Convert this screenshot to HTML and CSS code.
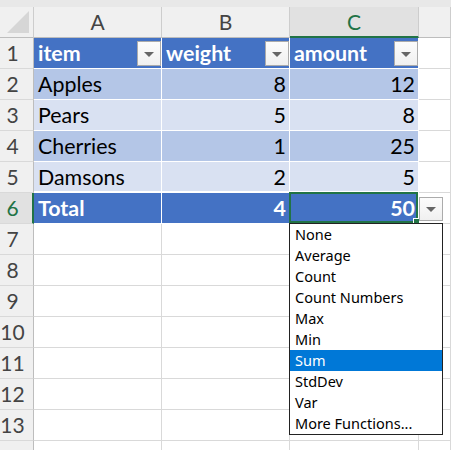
FILE: index.html
```html
<!DOCTYPE html>
<html lang="en">
<head>
  <meta charset="UTF-8">
  <title>Table Total Row</title>
  <link rel="stylesheet" href="styles.css">
</head>
<body>

  <div class="topbar"></div>

  <div class="sheet">
    <!-- column headers -->
    <div class="corner">
      <svg width="23" height="23" viewBox="0 0 23 23"><polygon points="22,0 22,22 0,22" fill="#d6d6d6"/></svg>
    </div>
    <div class="col-head">A</div>
    <div class="col-head">B</div>
    <div class="col-head active">C</div>
    <div class="col-head"></div>

    <!-- row 1: table header -->
    <div class="row-head">1</div>
    <div class="cell t th">item<span class="filter"></span></div>
    <div class="cell t th">weight<span class="filter"></span></div>
    <div class="cell t th">amount<span class="filter"></span></div>
    <div class="cell"></div>

    <div class="row-head">2</div>
    <div class="cell t band1">Apples</div>
    <div class="cell t band1 num">8</div>
    <div class="cell t band1 num">12</div>
    <div class="cell"></div>

    <div class="row-head">3</div>
    <div class="cell t band2">Pears</div>
    <div class="cell t band2 num">5</div>
    <div class="cell t band2 num">8</div>
    <div class="cell"></div>

    <div class="row-head">4</div>
    <div class="cell t band1">Cherries</div>
    <div class="cell t band1 num">1</div>
    <div class="cell t band1 num">25</div>
    <div class="cell"></div>

    <div class="row-head">5</div>
    <div class="cell t band2 last">Damsons</div>
    <div class="cell t band2 last num">2</div>
    <div class="cell t band2 last num">5</div>
    <div class="cell"></div>

    <div class="row-head active">6</div>
    <div class="cell t total">Total</div>
    <div class="cell t total num">4</div>
    <div class="cell t total num selected">
      50
      <span class="sel-box"><span class="handle"></span></span>
      <span class="drop-btn"></span>
      <ul class="func-list">
        <li>None</li>
        <li>Average</li>
        <li>Count</li>
        <li>Count Numbers</li>
        <li>Max</li>
        <li>Min</li>
        <li class="hover">Sum</li>
        <li>StdDev</li>
        <li>Var</li>
        <li>More Functions...</li>
      </ul>
    </div>
    <div class="cell"></div>

    <div class="row-head">7</div><div class="cell"></div><div class="cell"></div><div class="cell"></div><div class="cell"></div>
    <div class="row-head">8</div><div class="cell"></div><div class="cell"></div><div class="cell"></div><div class="cell"></div>
    <div class="row-head">9</div><div class="cell"></div><div class="cell"></div><div class="cell"></div><div class="cell"></div>
    <div class="row-head">10</div><div class="cell"></div><div class="cell"></div><div class="cell"></div><div class="cell"></div>
    <div class="row-head">11</div><div class="cell"></div><div class="cell"></div><div class="cell"></div><div class="cell"></div>
    <div class="row-head">12</div><div class="cell"></div><div class="cell"></div><div class="cell"></div><div class="cell"></div>
    <div class="row-head">13</div><div class="cell"></div><div class="cell"></div><div class="cell"></div><div class="cell"></div>
    <div class="row-head"></div><div class="cell"></div><div class="cell"></div><div class="cell"></div><div class="cell"></div>
  </div>

</body>
</html>
```

FILE: styles.css
```css
body {
  margin: 0;
  background-color: #fff;
  font-family: Lato, "Liberation Sans", sans-serif;
  overflow: hidden;
  height: 450px;
}

.topbar {
  height: 7px;
  background-color: #e8e8e8;
}

.sheet {
  display: grid;
  grid-template-columns: 34px 128px 128px 129px 1fr;
  grid-auto-rows: 31px;
}

.sheet > div {
  box-sizing: border-box;
  border-right: 1px solid #d9d9d9;
  border-bottom: 1px solid #d9d9d9;
}

/* headers */
.corner {
  background-color: #f0f0f0;
  display: flex;
  align-items: flex-end;
  justify-content: flex-end;
  padding: 0 3px 3px 0;
}

.corner svg {
  display: block;
}

.sheet > .corner,
.sheet > .col-head {
  border-bottom-color: #bdbdbd;
  border-right-color: #cdcdcd;
}

.col-head {
  background-color: #f0f0f0;
  color: #444;
  font-size: 21px;
  text-align: center;
  line-height: 30px;
}

.sheet > .col-head.active {
  background-color: #e1e1e1;
  color: #217346;
  border-bottom: 2px solid #217346;
  line-height: 29px;
}

.row-head {
  background-color: #f0f0f0;
  color: #444;
  font-size: 21px;
  line-height: 30px;
  text-align: center;
  padding-right: 8px;
}

.sheet > .row-head {
  border-right-color: #bdbdbd;
}

.sheet > .row-head.active {
  background-color: #e1e1e1;
  color: #217346;
  border-right: 2px solid #217346;
  padding-right: 7px;
}

/* cells */
.cell {
  font-size: 21.4px;
  line-height: 30px;
  padding: 0 4px;
  color: #000;
  position: relative;
}

.sheet > .t {
  border-color: #fff;
}

.th {
  background-color: #4472c4;
  color: #fff;
  font-weight: bold;
  display: flex;
  justify-content: space-between;
  padding-right: 0;
}

.band1 {
  background-color: #b4c6e7;
}

.band2 {
  background-color: #d9e1f2;
}

.last {
  box-shadow: inset 0 -1px 0 #fff;
}

.total {
  background-color: #4472c4;
  color: #fff;
  font-weight: bold;
}

.num {
  text-align: right;
  padding-right: 3px;
}

.filter {
  width: 24px;
  height: 25px;
  margin-top: 3px;
  box-sizing: border-box;
  border: 1px solid #ababab;
  background: linear-gradient(#fcfcfc, #f0f0f0);
  position: relative;
}

.filter::after,
.drop-btn::after {
  content: "";
  position: absolute;
  left: 50%;
  top: 50%;
  margin: -2px 0 0 -5px;
  border-left: 5px solid transparent;
  border-right: 5px solid transparent;
  border-top: 5px solid #666;
}

/* selected cell and total-row dropdown */
.sel-box {
  position: absolute;
  left: -1px;
  top: -1px;
  right: 0;
  bottom: 0;
  border: 2px solid #217346;
}

.handle {
  position: absolute;
  right: -4px;
  bottom: -4px;
  width: 5px;
  height: 5px;
  background-color: #217346;
  border: 1px solid #fff;
}

.drop-btn {
  position: absolute;
  left: 129px;
  top: 4px;
  width: 24px;
  height: 24px;
  box-sizing: border-box;
  border: 1px solid #ababab;
  background: linear-gradient(#fcfcfc, #f0f0f0);
}

.func-list {
  position: absolute;
  left: -1px;
  top: 30px;
  width: 154px;
  margin: 0;
  padding: 0;
  list-style-type: none;
  background-color: #fff;
  border: 1px solid #222;
  box-sizing: border-box;
  z-index: 2;
  font-family: "Noto Sans", sans-serif;
  font-weight: normal;
  font-size: 14.5px;
  color: #000;
  text-align: left;
}

.func-list li {
  height: 21px;
  line-height: 21px;
  padding-left: 5px;
}

.func-list li.hover {
  background-color: #0078d7;
  color: #fff;
}
```
